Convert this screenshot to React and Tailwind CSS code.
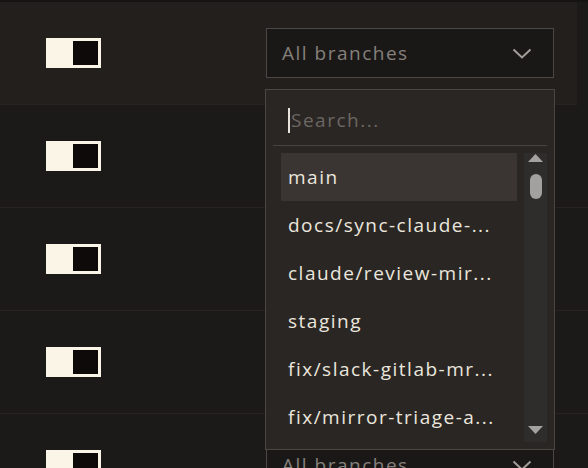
import React from 'react';

const font = { fontFamily: '"Open Sans", "Liberation Sans", sans-serif' };

const branches = [
  'main',
  'docs/sync-claude-...',
  'claude/review-mir...',
  'staging',
  'fix/slack-gitlab-mr...',
  'fix/mirror-triage-a...',
];

const Toggle = () => (
  <div className="w-[55px] h-[30px] bg-[#fbf5e7] p-[3px] flex justify-end">
    <div className="w-[25px] h-full bg-[#0d0a09]" />
  </div>
);

const Trigger = () => (
  <div className="w-[288px] h-[50px] border border-[#4a4744] bg-[#1a1817] flex items-center justify-between pl-[15px] pr-[21px]">
    <span className="text-[19px] tracking-[1.5px] text-[#85807b]">All branches</span>
    <svg width="20" height="11" viewBox="0 0 20 11" fill="none">
      <polyline points="1.5,1.5 10,9.5 18.5,1.5" stroke="#a29e99" strokeWidth="2" />
    </svg>
  </div>
);

const Row = ({ active }) => (
  <div className={`h-[103px] border-b border-[#262321] flex items-center pl-[46px] ${active ? 'bg-[#221f1d] mr-[11px]' : ''}`}>
    <Toggle />
    <div className="ml-[165px]">
      <Trigger />
    </div>
  </div>
);

const Dropdown = () => (
  <div className="absolute left-[265px] top-[89px] w-[290px] h-[361px] bg-[#2a2624] border border-[#4a4642] flex flex-col">
    <div className="mx-[7px] h-[56px] border-b border-[#47433f] flex items-center pl-[15px] pt-[6px]">
      <span className="w-[2px] h-[25px] bg-[#e8e4dc] mr-[1px]" />
      <span className="text-[19px] tracking-[1.5px] text-[#6c6762]">Search...</span>
    </div>
    <div className="flex flex-1 pt-[7px] pb-[7px] pl-[15px] pr-[7px] gap-[7px]">
      <div className="flex flex-col w-[236px]">
        {branches.map((b, i) => (
          <div
            key={b}
            className={`h-[48px] flex items-center pl-[7px] pr-[6px] text-[19px] tracking-[1.5px] text-[#ebe6dd] ${i === 0 ? 'bg-[#3a3532]' : ''}`}
          >
            <span className="truncate">{b}</span>
          </div>
        ))}
      </div>
      <div className="w-[23px] bg-[#2f2d2c] flex flex-col items-center">
        <svg width="15" height="8" viewBox="0 0 15 8" className="mt-[1px]">
          <polygon points="7.5,0 15,8 0,8" fill="#a4a2a0" />
        </svg>
        <div className="w-[12px] h-[25px] rounded-full bg-[#a3a19f] mt-[12px]" />
        <div className="flex-1" />
        <svg width="15" height="8" viewBox="0 0 15 8" className="mb-[8px]">
          <polygon points="0,0 15,0 7.5,8" fill="#a4a2a0" />
        </svg>
      </div>
    </div>
  </div>
);

export default function App() {
  return (
    <div className="relative w-[588px] h-[468px] overflow-hidden bg-[#1c1a18]" style={font}>
      <div className="h-[2px] bg-[#161413]" />
      <Row active />
      <Row />
      <Row />
      <Row />
      <Row />
      <Dropdown />
    </div>
  );
}
